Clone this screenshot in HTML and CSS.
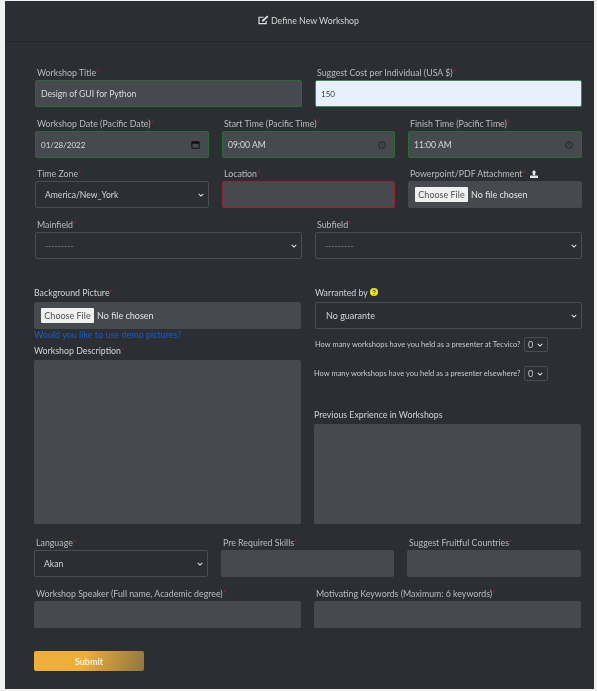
FILE: index.html
```html
<!DOCTYPE html>
<html lang="en">
<head>
<meta charset="utf-8">
<title>Define New Workshop</title>
<link rel="stylesheet" href="styles.css">
</head>
<body>
<main class="card">
  <header class="card-head">
    <svg class="head-icon" viewBox="0 0 12 11" width="11" height="10"><path d="M9 6.5V9.5H1V2.5H6" fill="none" stroke="#dfe1e3" stroke-width="1.3"/><path d="M4.5 5.5L10 0.6L11.4 2L6 7.2L4.2 7.4Z" fill="#dfe1e3"/></svg>
    <span>Define New Workshop</span>
  </header>
  <form class="form">
    <div class="row r1 halves">
      <div class="field"><label>Workshop Title<i>*</i></label><div class="ctl ok">Design of GUI for Python</div></div>
      <div class="field"><label>Suggest Cost per Individual (USA $)<i>*</i></label><div class="ctl ok autofill num">150</div></div>
    </div>
    <div class="row r2 thirds">
      <div class="field"><label>Workshop Date (Pacific Date)<i>*</i></label>
        <div class="ctl ok spread num">01/28/2022
          <svg viewBox="0 0 12 11" width="9" height="8"><rect x="1" y="1" width="10" height="9" rx="1" fill="none" stroke="#111" stroke-width="1.5"/><rect x="1" y="1" width="10" height="2.8" fill="#111"/></svg>
        </div></div>
      <div class="field"><label>Start Time (Pacific Time)<i>*</i></label>
        <div class="ctl ok spread">09:00 AM
          <svg viewBox="0 0 12 12" width="8" height="8"><circle cx="6" cy="6" r="5" fill="none" stroke="#1d1f22" stroke-width="1.3"/><path d="M6 3V6.3L8.2 7.6" fill="none" stroke="#1d1f22"/></svg>
        </div></div>
      <div class="field"><label>Finish Time (Pacific Time)<i>*</i></label>
        <div class="ctl ok spread">11:00 AM
          <svg viewBox="0 0 12 12" width="8" height="8"><circle cx="6" cy="6" r="5" fill="none" stroke="#1d1f22" stroke-width="1.3"/><path d="M6 3V6.3L8.2 7.6" fill="none" stroke="#1d1f22"/></svg>
        </div></div>
    </div>
    <div class="row r3 thirds">
      <div class="field"><label>Time Zone<i>*</i></label><div class="sel">America/New_York<svg class="chev" viewBox="0 0 8 5" width="6" height="4"><path d="M1 1L4 4L7 1" fill="none" stroke="#dee2e6" stroke-width="1.4"/></svg></div></div>
      <div class="field"><label>Location<i>*</i></label><div class="ctl bad"></div></div>
      <div class="field"><label>Powerpoint/PDF Attachment<i>*</i>
        <svg class="upload" viewBox="0 0 12 10" width="10" height="8"><path d="M6 0L9 3H7.6V6.5H4.4V3H3Z" fill="#e4e6e8"/><path d="M1 7H11V10H1Z" fill="#e4e6e8"/></svg></label>
        <div class="ctl file"><span class="choose">Choose File</span><span>No file chosen</span></div></div>
    </div>
    <div class="row r4 halves">
      <div class="field"><label>Mainfield<i>*</i></label><div class="sel dim">---------<svg class="chev" viewBox="0 0 8 5" width="6" height="4"><path d="M1 1L4 4L7 1" fill="none" stroke="#dee2e6" stroke-width="1.4"/></svg></div></div>
      <div class="field"><label>Subfield<i>*</i></label><div class="sel dim">---------<svg class="chev" viewBox="0 0 8 5" width="6" height="4"><path d="M1 1L4 4L7 1" fill="none" stroke="#dee2e6" stroke-width="1.4"/></svg></div></div>
    </div>
    <div class="row r5 halves">
      <div class="col-left">
        <div class="field"><label class="bright">Background Picture<i>*</i></label><div class="ctl file"><span class="choose">Choose File</span><span>No file chosen</span></div></div>
        <a class="demo" href="#">Would you like to use demo pictures?</a>
        <div class="field grow desc"><label class="bright">Workshop Description<i>*</i></label><div class="ctl area"></div></div>
      </div>
      <div class="col-right">
        <div class="field warranted"><label class="bright">Warranted by <svg class="help" viewBox="0 0 10 10" width="8" height="8"><circle cx="5" cy="5" r="5" fill="#f3e90c"/><path d="M3.4 4C3.4 2.2 6.7 2.2 6.7 4C6.7 5.1 5 5 5 6.2" fill="none" stroke="#26282b" stroke-width="1.2"/><circle cx="5" cy="7.8" r=".7" fill="#26282b"/></svg></label>
          <div class="sel big">No guarante<svg class="chev" viewBox="0 0 8 5" width="6" height="4"><path d="M1 1L4 4L7 1" fill="none" stroke="#dee2e6" stroke-width="1.4"/></svg></div></div>
        <div class="q q1"><span>How many workshops have you held as a presenter at Tecvico?</span><div class="mini">0<svg viewBox="0 0 8 5" width="6" height="4"><path d="M1 1L4 4L7 1" fill="none" stroke="#dee2e6" stroke-width="1.4"/></svg></div></div>
        <div class="q q2"><span>How many workshops have you held as a presenter elsewhere?</span><div class="mini">0<svg viewBox="0 0 8 5" width="6" height="4"><path d="M1 1L4 4L7 1" fill="none" stroke="#dee2e6" stroke-width="1.4"/></svg></div></div>
        <div class="field grow prev"><label class="bright">Previous Exprience in Workshops</label><div class="ctl area"></div></div>
      </div>
    </div>
    <div class="row r6 thirds">
      <div class="field"><label>Language<i>*</i></label><div class="sel">Akan<svg class="chev" viewBox="0 0 8 5" width="6" height="4"><path d="M1 1L4 4L7 1" fill="none" stroke="#dee2e6" stroke-width="1.4"/></svg></div></div>
      <div class="field"><label>Pre Required Skills<i>*</i></label><div class="ctl"></div></div>
      <div class="field"><label>Suggest Fruitful Countries<i>*</i></label><div class="ctl"></div></div>
    </div>
    <div class="row r7 halves">
      <div class="field"><label>Workshop Speaker (Full name, Academic degree)<i>*</i></label><div class="ctl"></div></div>
      <div class="field"><label>Motivating Keywords (Maximum: 6 keywords)<i>*</i></label><div class="ctl"></div></div>
    </div>
    <button class="submit" type="button">Submit</button>
  </form>
</main>
</body>
</html>
```
FILE: styles.css
```css
* { box-sizing: border-box; }
html, body { margin: 0; height: 100%; }
body { background: #f1f1f2; font-family: Lato, "Open Sans", sans-serif; font-size: 8.8px; color: #d6d8da; overflow: hidden; }
.card { margin: 1px 3px 0 5px; height: 688px; background: #2b2e33; filter: blur(0.45px); }
.card-head { height: 41px; padding: 0 0 2px 18px; border-bottom: 1px solid #22252a; display: flex; align-items: center; justify-content: center; gap: 2px; color: #d2d4d6; }
.form { padding: 0 12px 0 30px; }
.row { display: grid; }
.halves { grid-template-columns: 267px 267px; column-gap: 13px; }
.thirds { grid-template-columns: 174px 173px 174px; column-gap: 13px; }
.field { display: flex; flex-direction: column; min-width: 0; }
label { display: flex; align-items: center; height: 14px; padding: 0 0 1px 2px; color: #b9bcbf; white-space: nowrap; }
label.bright { color: #d0d2d4; height: 18px; padding: 0 0 2px; }
label i { color: #a31d2b; font-style: normal; }
.ctl { height: 27px; background: #46494e; border: 1px solid #46494e; border-radius: 2px; display: flex; align-items: center; padding: 0 8px 0 5px; color: #d8dadc; font-size: 8.6px; }
.num { font-size: 8px; }
.ok { border-color: #2a6a36; }
.bad { border-color: #8e2732; }
.autofill { background: #e8f0fe; color: #34373b; border-color: #3d8a55; }
.spread { justify-content: space-between; }
.file { padding: 0 0 0 6px; gap: 3px; color: #e3e4e6; font-size: 9px; }
.choose { width: 53px; height: 15px; background: #f0f0f0; color: #4c4e50; display: flex; align-items: center; justify-content: center; border-radius: 1px; }
.sel { height: 27px; border: 1px solid #4a4d52; border-radius: 2px; display: flex; align-items: center; justify-content: space-between; padding: 0 4px 0 9px; color: #d4d6d8; font-size: 8.6px; }
.dim { color: #7f8286; }
.big { font-size: 9px; padding-left: 10px; }
.r1 { padding-top: 24px; }
.r2 { padding-top: 10px; }
.r3 { padding-top: 9px; }
.r4 { padding-top: 10px; }
.r5 { padding-top: 25px; margin-left: -1px; }
.col-left, .col-right { display: flex; flex-direction: column; height: 240px; }
.grow { flex: 1; }
.area { flex: 1; height: auto; }
.demo { display: block; height: 12px; line-height: 12px; color: #1a5fc9; text-decoration: none; font-size: 9px; }
.desc label.bright { height: 19px; padding-bottom: 1px; }
.warranted { margin: 0 -1px 0 1px; }
.q { display: flex; align-items: center; justify-content: space-between; width: 233px; font-size: 7.5px; color: #c8cacc; white-space: nowrap; height: 15px; }
.q1 { margin: 8px 0 0 1px; }
.q2 { margin: 14px 0 0; width: 234px; }
.mini { width: 24px; height: 15px; flex: none; border: 1px solid #4a4d52; border-radius: 2px; display: flex; align-items: center; justify-content: space-between; padding: 0 4px 0 3px; font-size: 9px; }
.prev { margin-top: 25px; }
.r6 { padding-top: 12px; margin-left: -1px; }
.r7 { padding-top: 10px; margin-left: -1px; }
.submit { display: block; margin: 23px 0 0 -1px; width: 110px; height: 20px; border: 0; border-radius: 2px; font: 700 9px Lato, sans-serif; color: #f4f1e8; background: linear-gradient(110deg, #eeae3c 45%, #8f7440 100%); padding: 0; }
.upload { margin-left: 3px; }
.help { margin-left: 2px; }
```
